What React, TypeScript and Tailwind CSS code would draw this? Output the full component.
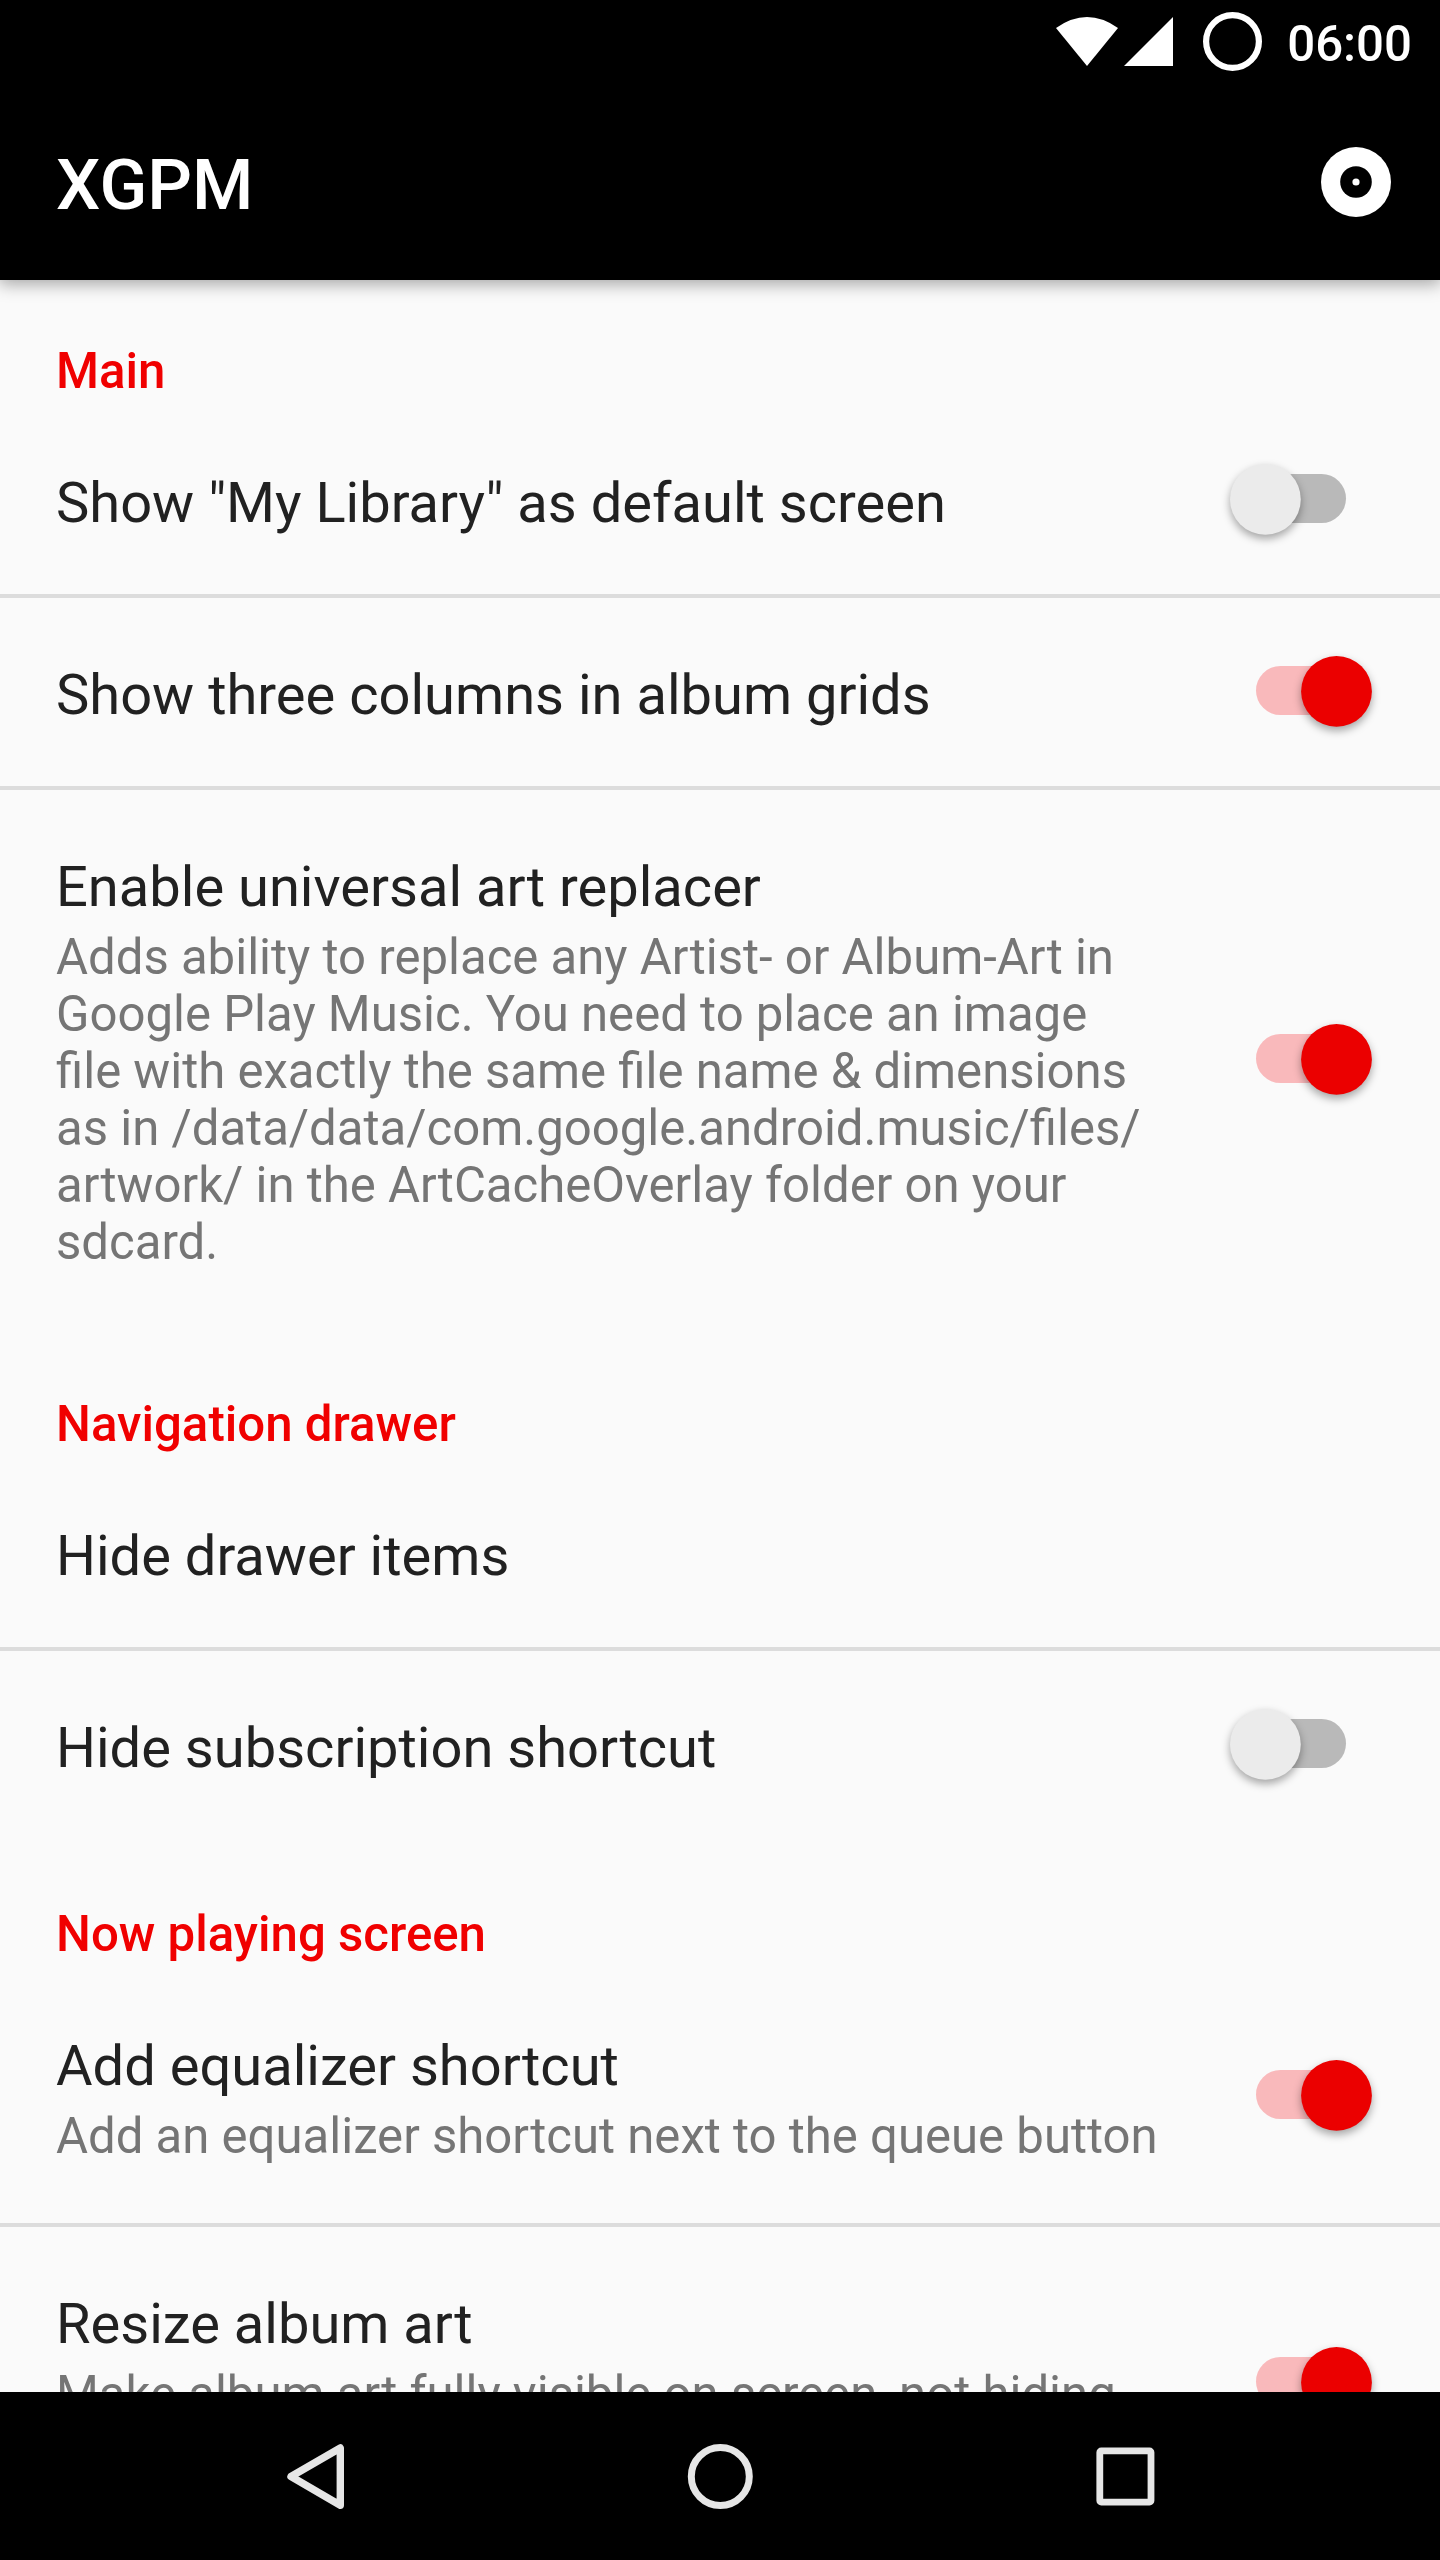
import React from "react";

function Toggle({ on }: { on: boolean }) {
  return (
    <svg className="block h-[100px] w-[164px] shrink-0 self-center" viewBox="0 0 164 100">
      <rect x="36" y="24" width="90" height="49" rx="24.5" fill={on ? "#f9b9bb" : "#b9b9b9"} />
      <circle
        className="drop-shadow-[0_4px_4px_rgba(0,0,0,0.35)]"
        cx={on ? 116.5 : 45.4}
        cy="49.4"
        r="35.4"
        fill={on ? "#eb0000" : "#ebebeb"}
      />
    </svg>
  );
}

function Heading({ children, className }: { children: React.ReactNode; className: string }) {
  return (
    <h2 className={`mb-1.5 shrink-0 pl-14 text-[49.2px] leading-[58px] font-medium text-[#f00000] ${className}`}>
      {children}
    </h2>
  );
}

type RowProps = {
  title: string;
  lines?: string[];
  on?: boolean;
  className: string;
  border?: boolean;
};

function Row({ title, lines = [], on, className, border = false }: RowProps) {
  return (
    <div
      className={`flex shrink-0 items-start justify-between pl-14 pr-14 ${border ? "border-b-4 border-[#dcdcdc]" : ""} ${className}`}
    >
      <div className="pt-16 whitespace-nowrap">
        <div className="text-[56.05px] leading-[66px] text-[#212121]">{title}</div>
        {lines.length > 0 && (
          <div className="mt-[9px] text-[49.1px] leading-[57px] text-[#757575]">
            {lines.map((line) => (
              <div key={line}>{line}</div>
            ))}
          </div>
        )}
      </div>
      {on !== undefined && <Toggle on={on} />}
    </div>
  );
}

function Header() {
  return (
    <header className="h-[280px] shrink-0 bg-black text-white shadow-[0_3px_16px_1px_rgba(0,0,0,0.35)]">
      <div className="flex h-[84px] items-start justify-end pr-7">
        <svg className="h-[84px] w-[208px]" viewBox="1056 0 208 84" fill="#fff">
          <path d="M1056 28Q1087 6 1118 28L1087 66Z" />
          <path d="M1124 66L1173 17V66Z" />
          <circle cx="1232.5" cy="41.5" r="26.4" fill="none" stroke="#fff" strokeWidth="6.2" />
        </svg>
        <div className="ml-[23px] text-[49.2px] leading-[88px] font-medium">06:00</div>
      </div>
      <div className="flex h-[196px] items-center justify-between pl-14 pr-12">
        <h1 className="pt-1.5 text-[70.2px] leading-[84px] font-medium">XGPM</h1>
        <svg className="h-[72px] w-[72px]" viewBox="0 0 72 72">
          <circle cx="36" cy="36" r="35" fill="#fff" />
          <circle cx="36" cy="36" r="15.8" fill="#000" />
          <circle cx="36" cy="36" r="3.6" fill="#fff" />
        </svg>
      </div>
    </header>
  );
}

function NavBar() {
  return (
    <nav className="flex h-[168px] shrink-0 items-center justify-between bg-black px-[255px]">
      <svg className="h-[168px] w-[120px]" viewBox="0 0 120 168" fill="none" stroke="#e6e6e6">
        <path d="M36 84.5L85.3 56V113.2Z" strokeWidth="7.4" strokeLinejoin="round" />
      </svg>
      <svg className="h-[168px] w-[120px]" viewBox="0 0 120 168" fill="none" stroke="#e6e6e6">
        <circle cx="60.3" cy="84.5" r="29" strokeWidth="7" />
      </svg>
      <svg className="h-[168px] w-[120px]" viewBox="0 0 120 168" fill="none" stroke="#e6e6e6">
        <rect x="34.8" y="58.9" width="51.2" height="51.2" rx="1.5" strokeWidth="6.8" strokeLinejoin="round" />
      </svg>
    </nav>
  );
}

export default function App() {
  return (
    <div className="flex h-[2560px] w-[1440px] flex-col overflow-hidden bg-[#fafafa] font-[Roboto,sans-serif]">
      <Header />
      <main className="flex min-h-0 flex-1 flex-col overflow-hidden">
        <Heading className="mt-[62px]">Main</Heading>
        <Row className="h-[192px]" border title={'Show "My Library" as default screen'} on={false} />
        <Row className="h-[192px]" border title="Show three columns in album grids" on />
        <Row
          className="h-[540px]"
          title="Enable universal art replacer"
          on
          lines={[
            "Adds ability to replace any Artist- or Album-Art in",
            "Google Play Music. You need to place an image",
            "file with exactly the same file name & dimensions",
            "as in /data/data/com.google.android.music/files/",
            "artwork/ in the ArtCacheOverlay folder on your",
            "sdcard.",
          ]}
        />
        <Heading className="mt-[65px]">Navigation drawer</Heading>
        <Row className="h-[192px]" border title="Hide drawer items" />
        <Row className="h-[188px]" title="Hide subscription shortcut" on={false} />
        <Heading className="mt-[66px]">Now playing screen</Heading>
        <Row
          className="h-[258px]"
          border
          title="Add equalizer shortcut"
          on
          lines={["Add an equalizer shortcut next to the queue button"]}
        />
        <Row
          className="h-[312px]"
          title="Resize album art"
          on
          lines={["Make album art fully visible on screen, not hiding"]}
        />
      </main>
      <NavBar />
    </div>
  );
}
